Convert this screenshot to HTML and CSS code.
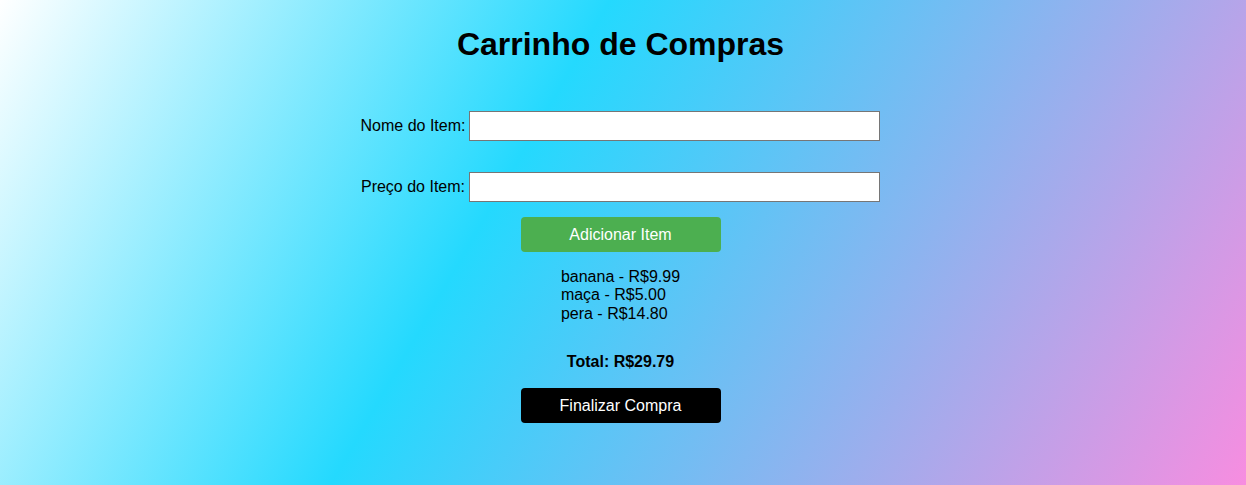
FILE: index.html
```html
<!DOCTYPE html>
<html lang="pt-BR">
<head>
<meta charset="UTF-8">
<title>Carrinho de Compras</title>
<link rel="stylesheet" href="styles.css">
</head>
<body>
<main class="page">
  <h1 class="title">Carrinho de Compras</h1>
  <div class="row row-first">
    <label class="label" for="nome">Nome do Item:</label>
    <input class="field" id="nome" type="text">
  </div>
  <div class="row row-second">
    <label class="label" for="preco">Preço do Item:</label>
    <input class="field" id="preco" type="text">
  </div>
  <button class="btn btn-add" type="button">Adicionar Item</button>
  <ul class="items">
    <li>banana - R$9.99</li>
    <li>maça - R$5.00</li>
    <li>pera - R$14.80</li>
  </ul>
  <p class="total">Total: R$29.79</p>
  <button class="btn btn-finish" type="button">Finalizar Compra</button>
</main>
</body>
</html>
```
FILE: styles.css
```css
html, body {
  margin: 0;
  padding: 0;
  height: 100%;
}
body {
  font-family: "Liberation Sans", Arial, sans-serif;
  font-size: 16px;
  color: #000;
  background: linear-gradient(120deg, #ffffff 0%, #24d9fe 40%, #f78de0 100%);
  min-height: 485px;
}
.page {
  display: flex;
  flex-direction: column;
  align-items: center;
  padding: 26px 5px 0 0;
}
.title {
  margin: 0;
  font-size: 32px;
  line-height: 37px;
  font-weight: bold;
}
.row {
  display: flex;
  align-items: center;
  gap: 4px;
}
.row-first {
  margin-top: 48px;
}
.row-second {
  margin-top: 31px;
}
.label {
  font-size: 16px;
}
.field {
  box-sizing: border-box;
  width: 411px;
  height: 30px;
  border: 1px solid #767676;
  background: #fff;
  padding: 0 4px;
  font-family: inherit;
  font-size: 16px;
}
.btn {
  box-sizing: border-box;
  width: 200px;
  padding: 8px 0;
  border: none;
  border-radius: 4px;
  color: #fff;
  font-family: inherit;
  font-size: 16px;
  line-height: 19px;
  cursor: pointer;
}
.btn-add {
  margin-top: 15px;
  background: #4caf50;
}
.items {
  list-style: none;
  margin: 16px 0 0;
  padding: 0;
  line-height: 18.4px;
}
.total {
  margin: 30px 0 0;
  font-weight: bold;
  line-height: 18.4px;
}
.btn-finish {
  margin-top: 16px;
  background: #000;
}
```
